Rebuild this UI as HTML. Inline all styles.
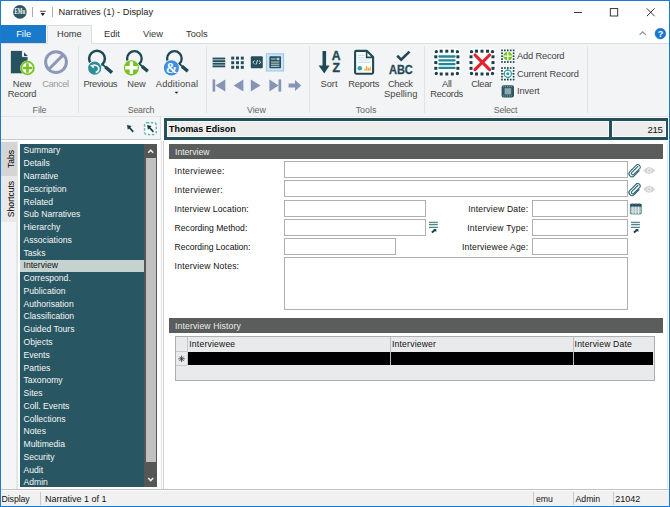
<!DOCTYPE html>
<html>
<head>
<meta charset="utf-8">
<title>Narratives (1) - Display</title>
<style>
html,body{margin:0;padding:0;}
body{width:670px;height:507px;overflow:hidden;background:#fff;font-family:"Liberation Sans",sans-serif;position:relative;}
.abs,.abs *{position:absolute;}
div,span,svg{position:absolute;box-sizing:border-box;}
.t{white-space:nowrap;line-height:1;}
/* ribbon text (Segoe-like) */
.rt{font-size:9.3px;color:#444;white-space:nowrap;line-height:1;text-align:center;transform:translateX(-50%);}
.rl{font-size:9.3px;color:#444;white-space:nowrap;line-height:1;}
.gl{font-size:8.9px;color:#666;white-space:nowrap;line-height:1;text-align:center;transform:translateX(-50%);}
.sep{width:1px;background:#e2e3e5;top:46px;height:67px;}
/* form text (Tahoma-like) */
.fl{font-size:8.6px;color:#111;white-space:nowrap;line-height:1;}
.fr{font-size:8.6px;color:#111;white-space:nowrap;line-height:1;text-align:right;}
.in{background:#fff;border:1px solid #afafaf;}
.nav{font-size:8.6px;color:#f4f6f6;white-space:nowrap;line-height:1;left:23.5px;}
.hdr{background:#5b5d5c;left:169px;width:494px;height:15px;}
.hdr span{left:6px;top:3.5px;font-size:8.6px;color:#ececec;white-space:nowrap;line-height:1;}
</style>
</head>
<body>
<!-- window frame -->
<div id="frame" style="left:0;top:0;width:670px;height:507px;border:1px solid #1b7ad3;z-index:50;pointer-events:none;"></div>

<!-- title bar -->
<div id="titlebar" style="left:1px;top:1px;width:668px;height:24px;background:#fff;">
  <svg style="left:12px;top:4px" width="14" height="14" viewBox="0 0 14 14"><circle cx="6.9" cy="6.9" r="6.8" fill="#2b5866"/><text x="6.9" y="9.3" font-size="7.6" font-weight="bold" fill="#fff" text-anchor="middle" font-family="Liberation Serif,serif" textLength="10.6" lengthAdjust="spacingAndGlyphs">EMu</text></svg>
  <div style="left:31px;top:6px;width:1px;height:10px;background:#adadad;"></div>
  <svg style="left:38px;top:9px" width="8" height="8" viewBox="0 0 8 8"><rect x="0.9" y="0.8" width="5.8" height="0.9" fill="#333"/><path d="M1.6 3 H6 L3.8 5.9 Z" fill="#222"/></svg>
  <div style="left:51px;top:6px;width:1px;height:10px;background:#adadad;"></div>
  <span class="t" style="left:57.5px;top:7px;font-size:9.25px;color:#222;">Narratives (1) - Display</span>
  <!-- window controls -->
  <svg style="left:559px;top:0" width="108" height="24" viewBox="0 0 108 24">
    <path d="M14 11.5 H22" stroke="#222" stroke-width="0.9" fill="none"/>
    <rect x="50.3" y="7.6" width="7.4" height="7.4" stroke="#222" stroke-width="0.9" fill="none"/>
    <path d="M86.8 7.4 L94.6 15.2 M94.6 7.4 L86.8 15.2" stroke="#222" stroke-width="0.9" fill="none"/>
  </svg>
</div>

<!-- tab row -->
<div id="tabrow" style="left:1px;top:25px;width:668px;height:18px;background:#fff;">
  <div style="left:0;top:0;width:45px;height:18px;background:#1979ca;"></div>
  <span class="t" style="left:15.2px;top:5px;font-size:9.25px;color:#fff;">File</span>
  <div style="left:45.5px;top:0;width:45.5px;height:19px;background:#f3f4f6;border:1px solid #dcdddf;border-bottom:none;z-index:3;"></div>
  <span class="t" style="left:56px;top:5px;font-size:9.25px;color:#333;z-index:4;">Home</span>
  <span class="t" style="left:103px;top:5px;font-size:9.25px;color:#333;">Edit</span>
  <span class="t" style="left:142px;top:5px;font-size:9.25px;color:#333;">View</span>
  <span class="t" style="left:185px;top:5px;font-size:9.25px;color:#333;">Tools</span>
  <svg style="left:636px;top:3px" width="32" height="14" viewBox="0 0 32 14">
    <path d="M2.6 6.9 L5.7 3.8 L8.8 6.9" stroke="#8c8c8c" stroke-width="1.1" fill="none"/>
    <circle cx="23.4" cy="5.6" r="5.3" fill="#1877d5" stroke="#0f60ba" stroke-width="0.6"/>
    <text x="23.4" y="8.9" font-size="9" font-weight="bold" fill="#fff" text-anchor="middle" font-family="Liberation Sans,sans-serif">?</text>
  </svg>
</div>

<!-- ribbon body -->
<div id="ribbon" style="left:1px;top:43px;width:668px;height:74px;background:#f3f4f6;border-top:1px solid #dcdddf;border-bottom:1px solid #e3e4e6;">
</div>


<!-- RIBBON CONTENT (page coords) -->
<div id="rc" style="left:0;top:0;width:670px;height:140px;">
  <div class="sep" style="left:78px"></div>
  <div class="sep" style="left:206px"></div>
  <div class="sep" style="left:308.5px"></div>
  <div class="sep" style="left:424px"></div>
  <div class="sep" style="left:587px"></div>
  <svg id="ricons" style="left:0;top:0" width="670" height="140" viewBox="0 0 670 140">
    <!-- New Record -->
    <path d="M10.4 50.4 H22.4 V56.6 H28 V73.8 H10.4 Z" fill="#27535f" stroke="#fafbfc" stroke-width="0.8"/>
    <path d="M24 52.2 L27.8 56 H24 Z" fill="#27535f"/>
    <circle cx="27.5" cy="68" r="7.4" fill="#f3f4f6"/>
    <circle cx="27.5" cy="68" r="6.3" fill="#fff" stroke="#76c31f" stroke-width="1.8"/>
    <path d="M27.5 63.2 V72.8 M22.7 68 H32.3" stroke="#76c31f" stroke-width="2.6" fill="none"/>
    <!-- Cancel -->
    <circle cx="56" cy="62.1" r="10.4" fill="none" stroke="#8d98b8" stroke-width="3"/>
    <path d="M48.8 69.3 L63.2 54.9" stroke="#8d98b8" stroke-width="3" fill="none"/>
    <!-- Previous search -->
    <circle cx="97" cy="58.6" r="7.9" fill="none" stroke="#1f4a55" stroke-width="2.5"/>
    <path d="M102.3 64.2 L106 67.6" stroke="#1f4a55" stroke-width="1.8" fill="none"/>
    <path d="M105.4 67 L112 72.6" stroke="#1f4a55" stroke-width="3.4" fill="none"/>
    <circle cx="94.7" cy="68.1" r="7.4" fill="#f6f7f8"/>
    <circle cx="94.7" cy="68.1" r="6.6" fill="#2f8d97"/>
    <path d="M92.4 66.6 A3.6 3.6 0 1 1 95.6 72.4" stroke="#e8f4f5" stroke-width="1.7" fill="none"/>
    <path d="M90 65.2 L94.6 64.4 L93.4 68.6 Z" fill="#e8f4f5"/>
    <!-- New search -->
    <circle cx="134.4" cy="58.5" r="7.3" fill="none" stroke="#1f4a55" stroke-width="2.3"/>
    <path d="M139.2 63.8 L143 67" stroke="#1f4a55" stroke-width="1.8" fill="none"/>
    <path d="M142 66.4 L147.8 71.2" stroke="#1f4a55" stroke-width="3.4" fill="none"/>
    <circle cx="131.4" cy="67.8" r="8.3" fill="#f6f7f8"/>
    <circle cx="131.4" cy="67.8" r="7.6" fill="#76c31f"/>
    <path d="M131.4 61.6 V74 M125.2 67.8 H137.6" stroke="#fff" stroke-width="3.4" fill="none"/>
    <!-- Additional search -->
    <circle cx="174.4" cy="58.5" r="7.3" fill="none" stroke="#1f4a55" stroke-width="2.3"/>
    <path d="M179.2 63.8 L183 67" stroke="#1f4a55" stroke-width="1.8" fill="none"/>
    <path d="M182 66.4 L187.8 71.2" stroke="#1f4a55" stroke-width="3.4" fill="none"/>
    <circle cx="171.4" cy="67.8" r="8.3" fill="#f6f7f8"/>
    <circle cx="171.4" cy="67.8" r="7.6" fill="#3d8ee2"/>
    <text x="171.6" y="72.6" font-size="14" font-weight="bold" fill="#fff" text-anchor="middle" font-family="Liberation Serif,serif">&amp;</text>
    <path d="M174.6 91.8 H178.4 L176.5 93.8 Z" fill="#222"/>

    <!-- View: list -->
    <g fill="#24505c">
      <rect x="212.6" y="57.6" width="12.6" height="1.9"/><rect x="212.6" y="60.2" width="12.6" height="1.9"/><rect x="212.6" y="62.8" width="12.6" height="1.9"/><rect x="212.6" y="65.4" width="12.6" height="1.9"/>
    </g>
    <!-- View: grid -->
    <g fill="#24505c">
      <rect x="231.2" y="56.6" width="3" height="3"/><rect x="236" y="56.6" width="3" height="3"/><rect x="240.8" y="56.6" width="3" height="3"/>
      <rect x="231.2" y="61.2" width="3" height="3"/><rect x="236" y="61.2" width="3" height="3"/><rect x="240.8" y="61.2" width="3" height="3"/>
      <rect x="231.2" y="65.8" width="3" height="3"/><rect x="236" y="65.8" width="3" height="3"/><rect x="240.8" y="65.8" width="3" height="3"/>
    </g>
    <!-- View: code -->
    <rect x="250.8" y="56.3" width="12" height="12" rx="1" fill="#24505c"/>
    <path d="M254.6 60.6 L252.8 62.3 L254.6 64 M259 60.6 L260.8 62.3 L259 64 M257.6 60 L256 64.6" stroke="#fff" stroke-width="0.8" fill="none"/>
    <!-- View: page (selected) -->
    <rect x="266.3" y="53.8" width="17.4" height="17.2" fill="#cde3f6" stroke="#8dbbe8" stroke-width="0.8"/>
    <rect x="269.4" y="56.3" width="11.6" height="12" rx="0.8" fill="#24505c"/>
    <path d="M271 59 H275.5 M271 62 H279.4 M271 64.2 H279.4 M271 66.3 H279.4" stroke="#dfe9ec" stroke-width="0.9" fill="none"/>
    <rect x="276.6" y="57.8" width="2.8" height="2.4" fill="#b9c9ce"/>
    <!-- Nav -->
    <g fill="#8794b6">
      <rect x="212.6" y="79.4" width="2.6" height="12.2"/><path d="M225.3 79.4 V91.6 L215.4 85.5 Z"/>
      <path d="M243.4 79.6 V91.4 L233.6 85.5 Z"/>
      <path d="M250.8 79.6 V91.4 L260.6 85.5 Z"/>
      <path d="M269.4 79.4 V91.6 L278.6 85.5 Z"/><rect x="278.5" y="79.4" width="2.7" height="12.2"/>
      <path d="M288.6 83.4 H295 V80 L301.2 85.5 L295 91 V87.6 H288.6 Z"/>
    </g>
    <!-- Sort -->
    <path d="M322.5 51 H326.1 V65.4 H329.6 L324.3 73.6 L318.6 65.4 H322.5 Z" fill="#1f4a55"/>
    <text x="336.2" y="60.4" font-size="12.2" font-weight="bold" fill="#1f4a55" stroke="#1f4a55" stroke-width="0.35" text-anchor="middle" font-family="Liberation Sans,sans-serif">A</text>
    <text x="336.2" y="71.7" font-size="12.2" font-weight="bold" fill="#1f4a55" stroke="#1f4a55" stroke-width="0.35" text-anchor="middle" font-family="Liberation Sans,sans-serif">Z</text>
    <!-- Reports -->
    <path d="M356.2 50.9 H367 L373.1 57 V72.6 Q373.1 73.7 372 73.7 H356.2 Q355.1 73.7 355.1 72.6 V52 Q355.1 50.9 356.2 50.9 Z" fill="#fff" stroke="#1f4a55" stroke-width="2.1" stroke-linejoin="round"/>
    <path d="M366.6 51.2 V57.4 H372.8" fill="none" stroke="#1f4a55" stroke-width="1.6"/>
    <path d="M357.6 55.3 H364.6 M357.6 57.6 H364.6 M357.6 60 H370.6 M357.6 62.3 H370.6" stroke="#c9e0f1" stroke-width="1.2" fill="none"/>
    <circle cx="359.8" cy="68.2" r="2.3" fill="#35a3a6"/>
    <path d="M365 70.8 V68.6 M366.7 70.8 V66 M368.4 70.8 V68 M370.1 70.8 V66.8" stroke="#f0a63c" stroke-width="1.3" fill="none"/>
    <!-- Check spelling -->
    <path d="M397.2 55.8 L401.2 59.6 L409.5 51.6" stroke="#1f4a55" stroke-width="2.6" fill="none"/>
    <text x="400.9" y="73.5" font-size="12.6" font-weight="bold" fill="#1f4a55" stroke="#1f4a55" stroke-width="0.3" text-anchor="middle" font-family="Liberation Sans,sans-serif" textLength="23.8" lengthAdjust="spacingAndGlyphs">ABC</text>
    <!-- All Records -->
    <rect x="433.5" y="48.2" width="27" height="27.8" rx="4.5" fill="#fff"/>
    <g fill="#17404b"><circle cx="436.3" cy="51.7" r="1.65"/><rect x="434.30" y="55.30" width="3.0" height="3.0"/><rect x="434.30" y="61.10" width="3.0" height="3.0"/><rect x="434.30" y="66.80" width="3.0" height="3.0"/><circle cx="436.3" cy="73.5" r="1.65"/><rect x="439.70" y="49.70" width="3.0" height="3.0"/><rect x="439.70" y="72.50" width="3.0" height="3.0"/><rect x="445.30" y="49.70" width="3.0" height="3.0"/><rect x="445.30" y="72.50" width="3.0" height="3.0"/><rect x="450.80" y="49.70" width="3.0" height="3.0"/><rect x="450.80" y="72.50" width="3.0" height="3.0"/><circle cx="457.4" cy="51.7" r="1.65"/><rect x="456.40" y="55.30" width="3.0" height="3.0"/><rect x="456.40" y="61.10" width="3.0" height="3.0"/><rect x="456.40" y="66.80" width="3.0" height="3.0"/><circle cx="457.4" cy="73.5" r="1.65"/></g>
    <g stroke="#1f8a95" stroke-width="2.3" stroke-linecap="round" fill="none">
      <path d="M439.4 56.5 H454.6 M439.4 60.3 H454.6 M439.4 64.1 H454.6 M439.4 67.9 H454.6"/>
    </g>
    <!-- Clear -->
    <rect x="468.7" y="48.2" width="27" height="27.8" rx="4.5" fill="#fff"/>
    <g fill="#17404b"><circle cx="471.5" cy="51.7" r="1.65"/><rect x="469.50" y="55.30" width="3.0" height="3.0"/><rect x="469.50" y="61.10" width="3.0" height="3.0"/><rect x="469.50" y="66.80" width="3.0" height="3.0"/><circle cx="471.5" cy="73.5" r="1.65"/><rect x="475.00" y="49.70" width="3.0" height="3.0"/><rect x="475.00" y="72.50" width="3.0" height="3.0"/><rect x="480.50" y="49.70" width="3.0" height="3.0"/><rect x="480.50" y="72.50" width="3.0" height="3.0"/><rect x="486.00" y="49.70" width="3.0" height="3.0"/><rect x="486.00" y="72.50" width="3.0" height="3.0"/><circle cx="492.5" cy="51.7" r="1.65"/><rect x="491.50" y="55.30" width="3.0" height="3.0"/><rect x="491.50" y="61.10" width="3.0" height="3.0"/><rect x="491.50" y="66.80" width="3.0" height="3.0"/><circle cx="492.5" cy="73.5" r="1.65"/></g>
    <path d="M475 55 L489.6 69.6 M489.6 55 L475 69.6" stroke="#e61f2b" stroke-width="3.1" stroke-linecap="round" fill="none"/>
    <!-- Add Record small -->
    <rect x="500.7" y="49.1" width="14.2" height="14.2" fill="#fff"/>
    <g fill="#17404b"><rect x="501.15" y="49.55" width="1.7" height="1.7"/><rect x="501.15" y="52.45" width="1.7" height="1.7"/><rect x="501.15" y="55.35" width="1.7" height="1.7"/><rect x="501.15" y="58.25" width="1.7" height="1.7"/><rect x="501.15" y="61.15" width="1.7" height="1.7"/><rect x="504.05" y="49.55" width="1.7" height="1.7"/><rect x="504.05" y="61.15" width="1.7" height="1.7"/><rect x="506.95" y="49.55" width="1.7" height="1.7"/><rect x="506.95" y="61.15" width="1.7" height="1.7"/><rect x="509.85" y="49.55" width="1.7" height="1.7"/><rect x="509.85" y="61.15" width="1.7" height="1.7"/><rect x="512.75" y="49.55" width="1.7" height="1.7"/><rect x="512.75" y="52.45" width="1.7" height="1.7"/><rect x="512.75" y="55.35" width="1.7" height="1.7"/><rect x="512.75" y="58.25" width="1.7" height="1.7"/><rect x="512.75" y="61.15" width="1.7" height="1.7"/></g>
    <circle cx="507.8" cy="56.2" r="4.4" fill="#76c31f"/>
    <path d="M507.8 52.1 V60.3 M503.7 56.2 H511.9" stroke="#fff" stroke-width="1.3" fill="none"/>
    <!-- Current Record small -->
    <rect x="500.7" y="66.7" width="14.2" height="14.2" fill="#fff"/>
    <g fill="#17404b"><rect x="501.15" y="67.15" width="1.7" height="1.7"/><rect x="501.15" y="70.05" width="1.7" height="1.7"/><rect x="501.15" y="72.95" width="1.7" height="1.7"/><rect x="501.15" y="75.85" width="1.7" height="1.7"/><rect x="501.15" y="78.75" width="1.7" height="1.7"/><rect x="504.05" y="67.15" width="1.7" height="1.7"/><rect x="504.05" y="78.75" width="1.7" height="1.7"/><rect x="506.95" y="67.15" width="1.7" height="1.7"/><rect x="506.95" y="78.75" width="1.7" height="1.7"/><rect x="509.85" y="67.15" width="1.7" height="1.7"/><rect x="509.85" y="78.75" width="1.7" height="1.7"/><rect x="512.75" y="67.15" width="1.7" height="1.7"/><rect x="512.75" y="70.05" width="1.7" height="1.7"/><rect x="512.75" y="72.95" width="1.7" height="1.7"/><rect x="512.75" y="75.85" width="1.7" height="1.7"/><rect x="512.75" y="78.75" width="1.7" height="1.7"/></g>
    <circle cx="507.8" cy="73.8" r="3.6" fill="#fff" stroke="#2f9aa0" stroke-width="1.2"/>
    <circle cx="507.8" cy="73.8" r="1.5" fill="#2f9aa0"/>
    <path d="M507.8 68.9 V70.5 M507.8 77.1 V78.7 M502.9 73.8 H504.5 M511.1 73.8 H512.7" stroke="#2f9aa0" stroke-width="1" fill="none"/>
    <!-- Invert small -->
    <rect x="501.6" y="85.2" width="12.4" height="12.2" rx="2" fill="#2c5763"/>
    <rect x="504.6" y="88.2" width="6.6" height="6.2" fill="#8fa7ad"/>
    <path d="M503.2 86.7 H512.6 M503.2 95.9 H512.6" stroke="#9fb4b9" stroke-width="0.9" stroke-dasharray="1 0.9" fill="none"/>
  </svg>
  <span class="rt" style="left:22px;top:79.8px;">New</span>
  <span class="rt" style="left:22px;top:90.0px;letter-spacing:-0.280px;">Record</span>
  <span class="rt" style="left:55.5px;top:79.8px;color:#9a9a9a;letter-spacing:-0.391px;">Cancel</span>
  <span class="rt" style="left:100.3px;top:79.8px;letter-spacing:-0.298px;">Previous</span>
  <span class="rt" style="left:136.5px;top:79.8px;">New</span>
  <span class="rt" style="left:177px;top:79.8px;letter-spacing:0.155px;">Additional</span>

  <span class="rt" style="left:329px;top:79.8px;letter-spacing:-0.016px;">Sort</span>
  <span class="rt" style="left:363.7px;top:79.8px;letter-spacing:-0.223px;">Reports</span>
  <span class="rt" style="left:400.3px;top:79.8px;letter-spacing:-0.351px;">Check</span>
  <span class="rt" style="left:400.7px;top:90.4px;letter-spacing:0.039px;">Spelling</span>
  <span class="rt" style="left:446.8px;top:79.8px;letter-spacing:-0.211px;">All</span>
  <span class="rt" style="left:446.6px;top:90.4px;letter-spacing:-0.290px;">Records</span>
  <span class="rt" style="left:481.5px;top:79.8px;letter-spacing:-0.305px;">Clear</span>
  <span class="rl" style="left:517px;top:52.2px;letter-spacing:-0.181px;">Add Record</span>
  <span class="rl" style="left:517px;top:70.0px;letter-spacing:-0.133px;">Current Record</span>
  <span class="rl" style="left:517px;top:87.4px;letter-spacing:-0.110px;">Invert</span>
  <span class="gl" style="left:39.5px;top:105.8px;letter-spacing:-0.127px;">File</span>
  <span class="gl" style="left:141px;top:105.8px;letter-spacing:-0.288px;">Search</span>
  <span class="gl" style="left:256.4px;top:105.8px;letter-spacing:-0.073px;">View</span>
  <span class="gl" style="left:366px;top:105.8px;letter-spacing:-0.005px;">Tools</span>
  <span class="gl" style="left:505.5px;top:105.8px;letter-spacing:-0.196px;">Select</span>
</div>

<!-- below ribbon strip (left toolbar) -->
<div id="strip" style="left:1px;top:117px;width:160px;height:23px;background:#f3f4f6;border-right:1px solid #dcdddf;border-bottom:1px solid #c9c9c9;"></div>


<!-- strip icons -->
<svg style="left:120px;top:117px" width="44" height="24" viewBox="120 117 44 24">
  <path d="M127 125 L131.6 126 L130.3 127.2 L133.9 131.2 L132.7 132.4 L129 128.5 L127.8 129.7 Z" fill="#17404b"/>
  <rect x="144.6" y="122.8" width="11.6" height="11.6" rx="2.2" fill="#fff" stroke="#62b3b8" stroke-width="1.5" stroke-dasharray="2.5 1.55"/>
  <path d="M147.1 125 L151.7 126 L150.4 127.2 L154 131.2 L152.8 132.4 L149.1 128.5 L147.9 129.7 Z" fill="#17404b"/>
</svg>

<!-- left vertical tabs -->
<div style="left:1px;top:141px;width:17px;height:348px;background:#f4f5f7;border-right:2px solid #e6e6e6;"></div>
<div style="left:1px;top:142px;width:15.5px;height:33.5px;background:#d5d5d5;"></div>
<div style="left:1px;top:175.5px;width:15.5px;height:46.5px;background:#e9e9e9;"></div>

<span class="fl" style="left:11px;top:158.6px;transform:translate(-50%,-50%) rotate(-90deg);color:#000;">Tabs</span>
<span class="fl" style="left:11px;top:199.2px;transform:translate(-50%,-50%) rotate(-90deg);color:#000;">Shortcuts</span>

<!-- nav panel -->
<div id="nav" style="left:0;top:0;width:160px;height:489px;overflow:hidden;">
  <div style="left:20px;top:144px;width:137px;height:343px;background:#285662;"></div>
  <span class="nav" style="top:146.4px;">Summary</span>
  <span class="nav" style="top:159.2px;">Details</span>
  <span class="nav" style="top:171.9px;">Narrative</span>
  <span class="nav" style="top:184.7px;">Description</span>
  <span class="nav" style="top:197.5px;">Related</span>
  <span class="nav" style="top:210.2px;">Sub Narratives</span>
  <span class="nav" style="top:223.0px;">Hierarchy</span>
  <span class="nav" style="top:235.8px;">Associations</span>
  <span class="nav" style="top:248.6px;">Tasks</span>
  <div style="left:20px;top:259.6px;width:124px;height:12.4px;background:#c4d3cf;"></div>
  <span class="nav" style="top:261.3px;color:#111;">Interview</span>
  <span class="nav" style="top:274.1px;">Correspond.</span>
  <span class="nav" style="top:286.9px;">Publication</span>
  <span class="nav" style="top:299.6px;">Authorisation</span>
  <span class="nav" style="top:312.4px;">Classification</span>
  <span class="nav" style="top:325.2px;">Guided Tours</span>
  <span class="nav" style="top:337.9px;">Objects</span>
  <span class="nav" style="top:350.7px;">Events</span>
  <span class="nav" style="top:363.5px;">Parties</span>
  <span class="nav" style="top:376.3px;">Taxonomy</span>
  <span class="nav" style="top:389.0px;">Sites</span>
  <span class="nav" style="top:401.8px;">Coll. Events</span>
  <span class="nav" style="top:414.6px;">Collections</span>
  <span class="nav" style="top:427.3px;">Notes</span>
  <span class="nav" style="top:440.1px;">Multimedia</span>
  <span class="nav" style="top:452.9px;">Security</span>
  <span class="nav" style="top:465.6px;">Audit</span>
  <span class="nav" style="top:478.4px;">Admin</span>

  <!-- scrollbar -->
  <div style="left:144px;top:144px;width:13px;height:343px;background:#555756;"></div>
  <div style="left:146px;top:158px;width:10px;height:303.5px;background:#c1c1c1;"></div>
  <svg style="left:144px;top:144px" width="13" height="343" viewBox="0 0 13 343">
    <path d="M4.2 8.7 L6.7 6.1 L9.2 8.7" stroke="#ececec" stroke-width="1.6" fill="none"/>
    <path d="M4.2 334 L6.7 336.6 L9.2 334" stroke="#ececec" stroke-width="1.6" fill="none"/>
  </svg>
</div>
<!-- cover nav bottom overflow -->
<div style="left:18px;top:487px;width:142px;height:2px;background:#fff;"></div>

<!-- right pane borders -->
<div style="left:160.5px;top:141px;width:1px;height:348px;background:#e2e2e2;"></div>
<div style="left:163px;top:141px;width:1px;height:348px;background:#d4d4d4;"></div>
<div style="left:667px;top:141px;width:1px;height:348px;background:#e8e8e8;"></div>

<!-- summary box -->
<div style="left:164px;top:118.3px;width:504.2px;height:21.5px;background:#24505c;"></div>
<div style="left:166.5px;top:120.9px;width:442px;height:16.4px;background:#ededed;border:1px solid #fafafa;"></div>
<div style="left:611.7px;top:120.9px;width:54.3px;height:16.4px;background:#ededed;border:1px solid #fafafa;"></div>
<span class="t" style="left:169px;top:125.2px;font-size:8.9px;font-weight:bold;color:#000;letter-spacing:0.04px;">Thomas Edison</span>
<span class="t" style="right:7.5px;top:124.9px;font-size:9.6px;letter-spacing:-0.3px;color:#111;">215</span>

<!-- Interview section -->
<div class="hdr" style="top:144px;"><span>Interview</span></div>
<span class="fl" style="left:174.6px;top:166.6px;letter-spacing:0.313px;">Interviewee:</span>
<span class="fl" style="left:174.6px;top:185.6px;letter-spacing:0.323px;">Interviewer:</span>
<span class="fl" style="left:174.6px;top:204.6px;letter-spacing:0.139px;">Interview Location:</span>
<span class="fl" style="left:174.6px;top:223.6px;letter-spacing:0.005px;">Recording Method:</span>
<span class="fl" style="left:174.6px;top:242.6px;letter-spacing:-0.029px;">Recording Location:</span>
<span class="fl" style="left:174.6px;top:261.8px;letter-spacing:0.186px;">Interview Notes:</span>
<div class="in" style="left:283.5px;top:161px;width:344.5px;height:16.5px;"></div>
<div class="in" style="left:283.5px;top:180px;width:344.5px;height:16.5px;"></div>
<div class="in" style="left:283.5px;top:200px;width:142px;height:16.5px;"></div>
<div class="in" style="left:283.5px;top:219px;width:142px;height:16.5px;"></div>
<div class="in" style="left:283.5px;top:238.2px;width:112.2px;height:16.5px;"></div>
<div class="in" style="left:283.5px;top:257.4px;width:344.5px;height:52.3px;"></div>
<div class="in" style="left:532px;top:200px;width:96px;height:16.5px;"></div>
<div class="in" style="left:532px;top:219px;width:96px;height:16.5px;"></div>
<div class="in" style="left:532px;top:238.2px;width:96px;height:16.5px;"></div>
<span class="fr" style="right:141.6px;top:204.6px;letter-spacing:0.192px;">Interview Date:</span>
<span class="fr" style="right:141.6px;top:223.6px;letter-spacing:0.237px;">Interview Type:</span>
<span class="fr" style="right:141.6px;top:242.6px;letter-spacing:0.185px;">Interviewee Age:</span>


<!-- field icons -->
<svg style="left:0;top:0" width="670" height="507" viewBox="0 0 670 507">
  <g transform="translate(635.5 170.2) rotate(-45)" fill="none" stroke="#2a6471" stroke-width="1.1">
    <path d="M4.8 -1 H-4.2 A1.4 1.4 0 0 0 -4.2 1.8 H4.8 A2.7 2.7 0 0 0 4.8 -3 H-4.9 A2.9 2.9 0 0 0 -4.9 3 H2.6"/>
  </g>
  <path d="M643.2 170.4 Q649.2 163.4 655.2 170.4 Q649.2 177.4 643.2 170.4 Z" fill="#d2d2d2"/><circle cx="649.2" cy="170.4" r="2.5" fill="#e9e9e9"/><circle cx="649.2" cy="170.4" r="1" fill="#c9c9c9"/>
  <g transform="translate(635.5 189.1) rotate(-45)" fill="none" stroke="#2a6471" stroke-width="1.1">
    <path d="M4.8 -1 H-4.2 A1.4 1.4 0 0 0 -4.2 1.8 H4.8 A2.7 2.7 0 0 0 4.8 -3 H-4.9 A2.9 2.9 0 0 0 -4.9 3 H2.6"/>
  </g>
  <path d="M643.2 189.3 Q649.2 182.3 655.2 189.3 Q649.2 196.3 643.2 189.3 Z" fill="#d2d2d2"/><circle cx="649.2" cy="189.3" r="2.5" fill="#e9e9e9"/><circle cx="649.2" cy="189.3" r="1" fill="#c9c9c9"/>
  <!-- calendar -->
  <rect x="630.3" y="204" width="11" height="10" rx="0.8" fill="#a9bdc2" stroke="#2f6370" stroke-width="0.7"/>
  <rect x="630.3" y="204" width="11" height="2.6" fill="#24505c"/>
  <path d="M633 206.6 V214 M635.8 206.6 V214 M638.6 206.6 V214" stroke="#f4f7f8" stroke-width="0.9" fill="none"/>
  <path d="M630.6 209 H641 M630.6 211.5 H641" stroke="#d6e1e3" stroke-width="0.6" fill="none"/>
  <path d="M632.4 203.2 V204.6 M635.8 203.2 V204.6 M639.2 203.2 V204.6" stroke="#6f8f97" stroke-width="0.9" fill="none"/>
  <rect x="429.0" y="221.8" width="8.8" height="6.1" fill="#e3ecee"/>
  <path d="M429.0 222.3 H437.8 M429.0 224.6 H437.8 M429.0 227.4 H437.8" stroke="#3f7480" stroke-width="1" fill="none"/>
  <path d="M431.8 232.5 L435.0 230" stroke="#17404b" stroke-width="1.9" fill="none"/>
  <path d="M433.2 229 H436.3 V232 Z" fill="#17404b"/>
  <rect x="631.1" y="221.8" width="8.8" height="6.1" fill="#e3ecee"/>
  <path d="M631.1 222.3 H639.9 M631.1 224.6 H639.9 M631.1 227.4 H639.9" stroke="#3f7480" stroke-width="1" fill="none"/>
  <path d="M633.9 232.5 L637.1 230" stroke="#17404b" stroke-width="1.9" fill="none"/>
  <path d="M635.3000000000001 229 H638.4 V232 Z" fill="#17404b"/>
</svg>

<!-- Interview History -->
<div class="hdr" style="top:318.2px;"><span style="letter-spacing:0.14px;">Interview History</span></div>
<div style="left:175.3px;top:335.8px;width:480.2px;height:45.7px;background:#e9eaeb;border:1px solid #aeaeae;"></div>
<div style="left:187.5px;top:352px;width:465.6px;height:13.4px;background:#000;"></div>
<div style="left:187px;top:337px;width:1px;height:28.4px;background:#c9c9c9;"></div>
<div style="left:176.3px;top:351.4px;width:11px;height:1px;background:#c9c9c9;"></div>
<div style="left:176.3px;top:365.2px;width:11px;height:1px;background:#c9c9c9;"></div>
<div style="left:389.8px;top:337px;width:1px;height:28.4px;background:#bdbdbd;"></div>
<div style="left:572.6px;top:337px;width:1px;height:28.4px;background:#bdbdbd;"></div>
<span class="fl" style="left:189.3px;top:340.3px;letter-spacing:0.19px;">Interviewee</span>
<span class="fl" style="left:392px;top:340.3px;letter-spacing:0.19px;">Interviewer</span>
<span class="fl" style="left:574.6px;top:340.3px;letter-spacing:0.17px;">Interview Date</span>
<svg style="left:177px;top:354px" width="10" height="10" viewBox="0 0 10 10"><path d="M4.6 1.6 V8 M1.4 4.8 H7.8 M2.4 2.6 L6.8 7 M6.8 2.6 L2.4 7" stroke="#333" stroke-width="0.8" fill="none"/></svg>

<!-- status bar -->
<div id="status" style="left:1px;top:489px;width:668px;height:17px;background:#f1f1f1;border-top:1px solid #c2c2c2;box-shadow:inset 0 1px 0 #fafafa;">
  <span class="fl" style="left:0.5px;top:5.1px;font-size:8.8px;letter-spacing:-0.1px;">Display</span>
  <div style="left:39px;top:2px;width:1px;height:13px;background:#c8c8c8;"></div>
  <span class="fl" style="left:44px;top:5.1px;font-size:9px;">Narrative 1 of 1</span>
  <div style="left:531.5px;top:2px;width:1px;height:13px;background:#c8c8c8;"></div>
  <span class="fl" style="left:535px;top:5.1px;font-size:8.7px;">emu</span>
  <div style="left:571.5px;top:2px;width:1px;height:13px;background:#c8c8c8;"></div>
  <span class="fl" style="left:574.5px;top:5.1px;font-size:8.7px;">Admin</span>
  <div style="left:611.5px;top:2px;width:1px;height:13px;background:#c8c8c8;"></div>
  <span class="fl" style="left:614.3px;top:5.1px;font-size:9px;">21042</span>
</div>
</body>
</html>
